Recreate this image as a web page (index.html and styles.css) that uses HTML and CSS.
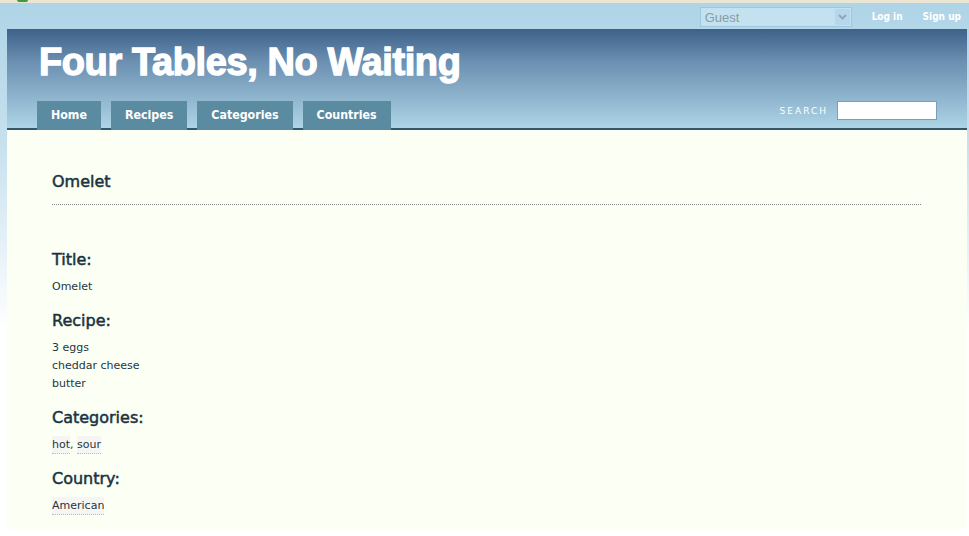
FILE: index.html
```html
<!DOCTYPE html>
<html>
<head>
<meta charset="utf-8">
<title>Four Tables, No Waiting</title>
<link rel="stylesheet" href="styles.css">
</head>
<body>
<div class="chrome"><span class="chrome-dot"></span></div>
<div class="topbar">
  <div class="select">
    <span class="select-text">Guest</span>
    <span class="select-btn">
      <svg width="9" height="6" viewBox="0 0 9 6"><path d="M1 1 L4.5 4.5 L8 1" fill="none" stroke="#8ea9b9" stroke-width="2"/></svg>
    </span>
  </div>
  <a class="toplink" href="#">Log in</a>
  <a class="toplink" href="#">Sign up</a>
</div>
<div class="page">
  <div class="header">
    <h1 class="site-title">Four Tables, No Waiting</h1>
    <div class="navrow">
      <ul class="tabs">
        <li class="tab">Home</li>
        <li class="tab">Recipes</li>
        <li class="tab">Categories</li>
        <li class="tab">Countries</li>
      </ul>
      <div class="search">
        <span class="search-label">SEARCH</span>
        <span class="search-input"></span>
      </div>
    </div>
  </div>
  <div class="content">
    <h2 class="page-title">Omelet</h2>
    <h3 class="field first">Title:</h3>
    <p class="value">Omelet</p>
    <h3 class="field">Recipe:</h3>
    <p class="value">3 eggs<br>cheddar cheese<br>butter</p>
    <h3 class="field">Categories:</h3>
    <p class="value"><a class="tag" href="#">hot</a>, <a class="tag" href="#">sour</a></p>
    <h3 class="field">Country:</h3>
    <p class="value"><a class="tag" href="#">American</a></p>
  </div>
</div>
</body>
</html>
```
FILE: styles.css
```css
html, body {
  margin: 0;
  padding: 0;
}
body {
  background: #ffffff linear-gradient(#aed4e7 0, #c6e0ee 140px, #ffffff 330px) no-repeat;
  min-height: 536px;
  font-family: "DejaVu Sans", sans-serif;
  color: #1f3642;
}
.chrome {
  height: 3px;
  background: #ebe6d3;
  position: relative;
}
.chrome-dot {
  position: absolute;
  left: 17px;
  top: 0;
  width: 11px;
  height: 2px;
  border-radius: 0 0 5px 5px;
  background: #3f9a3a;
}
.topbar {
  height: 26px;
  display: flex;
  justify-content: flex-end;
  align-items: flex-start;
  gap: 20px;
  padding-right: 8px;
}
.select {
  margin-top: 4px;
  width: 152px;
  height: 20px;
  box-sizing: border-box;
  border: 1px solid #9cc7de;
  background: #c4e1ef;
  display: flex;
  align-items: center;
  justify-content: space-between;
  padding: 0 1px 0 4px;
}
.select-text {
  font-family: "Liberation Sans", Arial, sans-serif;
  font-size: 13px;
  color: #8a9ca6;
}
.select-btn {
  width: 15px;
  height: 16px;
  background: #b6d7eb;
  display: flex;
  align-items: center;
  justify-content: center;
}
.toplink {
  font-family: "DejaVu Sans Condensed", "DejaVu Sans", sans-serif;
  font-stretch: condensed;
  font-weight: bold;
  font-size: 10px;
  color: #ffffff;
  text-decoration: none;
  line-height: 14px;
  margin-top: 7px;
}
.page {
  margin-left: 7px;
  width: 960px;
}
.header {
  height: 101px;
  box-sizing: border-box;
  border-bottom: 2px solid #33576b;
  background: linear-gradient(#3e6189 0, #6a8fb0 32px, #aed4e7 100%);
  padding: 14px 30px 0 30px;
  display: flex;
  flex-direction: column;
}
.site-title {
  margin: 0 0 0 2px;
  font-family: "Liberation Sans", Arial, sans-serif;
  font-weight: 900;
  font-size: 38px;
  line-height: 38px;
  letter-spacing: -0.4px;
  color: #ffffff;
  -webkit-text-stroke: 1.3px #ffffff;
}
.navrow {
  margin-top: auto;
  display: flex;
  justify-content: space-between;
  align-items: flex-start;
  margin-bottom: -2px;
}
.tabs {
  list-style: none;
  margin: 0;
  padding: 0;
  display: flex;
  gap: 10px;
}
.tab {
  height: 29px;
  line-height: 28px;
  padding: 0 14px;
  background: #5b8ba0;
  color: #ffffff;
  font-family: "DejaVu Sans Condensed", "DejaVu Sans", sans-serif;
  font-stretch: condensed;
  font-weight: bold;
  font-size: 12.3px;
}
.search {
  display: flex;
  align-items: center;
  gap: 9px;
}
.search-label {
  font-size: 9px;
  letter-spacing: 2px;
  color: #ffffff;
}
.search-input {
  width: 100px;
  height: 19px;
  box-sizing: border-box;
  border: 1px solid #7f9db9;
  background: #ffffff;
}
.content {
  background: #fbfff4;
  padding: 42px 46px 14px 45px;
}
.page-title {
  margin: 0;
  font-family: "DejaVu Sans", sans-serif;
  font-weight: normal;
  font-size: 16px;
  line-height: 20px;
  padding-bottom: 12px;
  border-bottom: 1px dotted #8a8a8a;
  color: #1b3240;
  -webkit-text-stroke: 0.5px #1b3240;
}
.field {
  margin: 15px 0 8px 0;
  font-family: "DejaVu Sans", sans-serif;
  font-weight: normal;
  font-size: 16px;
  line-height: 20px;
  color: #1b3240;
  -webkit-text-stroke: 0.5px #1b3240;
}
.field.first {
  margin-top: 45px;
}
.value {
  margin: 0;
  font-size: 11px;
  line-height: 18px;
  color: #1f3642;
}
.tag {
  color: #1f3642;
  text-decoration: none;
  background: #f5f6f3;
  padding: 2px 0;
  border-bottom: 1px dotted #b9bcc0;
}
```
